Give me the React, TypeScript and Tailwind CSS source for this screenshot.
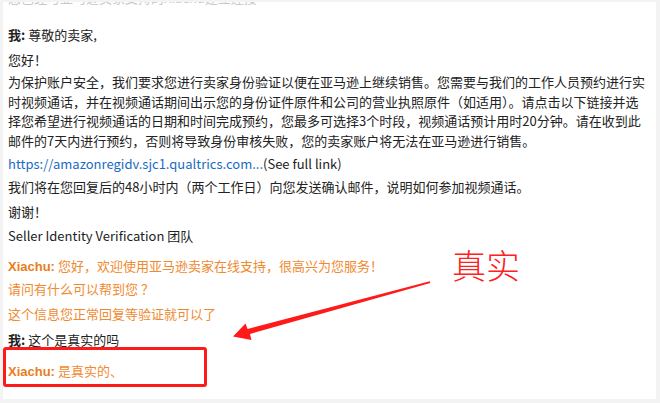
import React from "react";

const F = { fontFamily: '"Noto Sans CJK SC", sans-serif' };

export default function App() {
  return (
    <div className="w-[660px] h-[403px] bg-[#f3f3f3] relative overflow-hidden" style={F}>
      <div className="absolute inset-0 pt-[2px] pl-[3px] pr-[4px] pb-[4px]">
        <div className="bg-white w-full h-full overflow-hidden pl-[5px] text-[13px] text-[#222] whitespace-nowrap">
          <div className="leading-[20px] -mt-[14px] text-[#c8c8c8]">您已经与亚马逊卖家支持的Xiachu建立连接</div>
          <div className="leading-[24px] mt-[15px]"><b>我:</b> 尊敬的卖家,</div>
          <div className="leading-[24px] mt-[1px]">您好！</div>
          <div className="leading-[19.5px] mt-[0px]">
            为保护账户安全，我们要求您进行卖家身份验证以便在亚马逊上继续销售。您需要与我们的工作人员预约进行实<br />
            时视频通话，并在视频通话期间出示您的身份证件原件和公司的营业执照原件（如适用）。请点击以下链接并选<br />
            择您希望进行视频通话的日期和时间完成预约，您最多可选择3个时段，视频通话预计用时20分钟。请在收到此<br />
            邮件的7天内进行预约，否则将导致身份审核失败，您的卖家账户将无法在亚马逊进行销售。
          </div>
          <div className="leading-[22px] mt-[3px]">
            <span className="text-[#1a6bc2]">https://amazonregidv.sjc1.qualtrics.com...</span>(See full link)
          </div>
          <div className="leading-[24px]">我们将在您回复后的48小时内（两个工作日）向您发送确认邮件，说明如何参加视频通话。</div>
          <div className="leading-[24px] mt-[1px]">谢谢！</div>
          <div className="leading-[24px]">Seller Identity Verification 团队</div>
          <div className="leading-[22px] mt-[7px] text-[#f08a30]">
            <b className="text-[#e97d1c]" style={{ fontFamily: '"Liberation Sans", sans-serif' }}>Xiachu:</b> 您好，欢迎使用亚马逊卖家在线支持，很高兴为您服务！
          </div>
          <div className="leading-[22px] text-[#f08a30]">请问有什么可以帮到您 ？</div>
          <div className="leading-[24px] mt-[2px] text-[#f08a30]">这个信息您正常回复等验证就可以了</div>
          <div className="leading-[24px] mt-[2px]"><b>我:</b> 这个是真实的吗</div>
          <div className="leading-[24px] mt-[7px] text-[#f08a30]">
            <b className="text-[#e97d1c]" style={{ fontFamily: '"Liberation Sans", sans-serif' }}>Xiachu:</b> 是真实的、
          </div>
        </div>
      </div>

      {/* annotation: red box */}
      <div className="absolute left-[3px] top-[347px] w-[204px] h-[40px] border-[3px] border-[#ff1a1a] rounded-[3px]" />

      {/* annotation: label */}
      <div className="absolute left-[452px] top-[245px] text-[34px] leading-[40px] font-light text-[#ff2020]">真实</div>

      {/* annotation: arrow */}
      <svg className="absolute left-0 top-0" width="660" height="403" viewBox="0 0 660 403">
        <polygon
          fill="#ff1a1a"
          points="429.8,281.2 430.3,283.0 250.0,334.0 251.5,340.0 233,336.5 245.5,323.5 247.6,329.0"
        />
      </svg>
    </div>
  );
}
